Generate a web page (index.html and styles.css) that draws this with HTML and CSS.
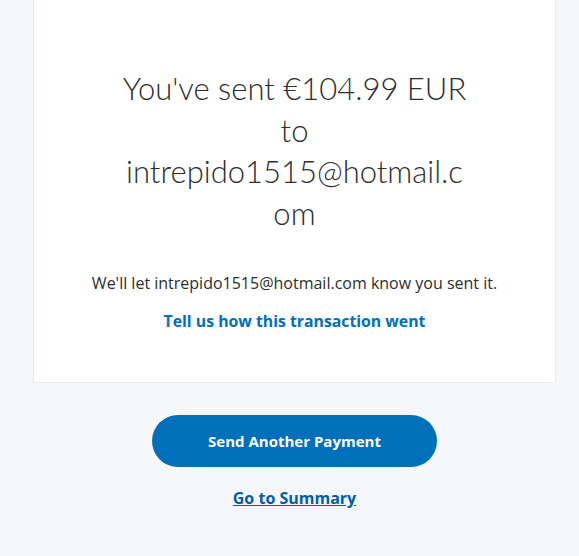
FILE: index.html
```html
<!DOCTYPE html>
<html lang="en">
<head>
<meta charset="utf-8">
<title>Payment sent</title>
<link rel="stylesheet" href="styles.css">
</head>
<body>
<main class="page">
  <section class="card">
    <h1 class="headline">You've sent €104.99 EUR to intrepido1515@hotmail.com</h1>
    <p class="note">We'll let intrepido1515@hotmail.com know you sent it.</p>
    <a class="feedback" href="#">Tell us how this transaction went</a>
  </section>
  <div class="actions">
    <a class="primary-btn" href="#">Send Another Payment</a>
    <a class="summary-link" href="#">Go to Summary</a>
  </div>
</main>
</body>
</html>
```
FILE: styles.css
```css
html, body {
  margin: 0;
  padding: 0;
  background: #f5f7fa;
}
body {
  font-family: "Open Sans", "Liberation Sans", sans-serif;
  color: #2c2e2f;
  height: 556px;
  overflow: hidden;
}
.page {
  display: flex;
  flex-direction: column;
}
.card {
  margin-left: 33px;
  width: 521px;
  background: #ffffff;
  border: 1px solid #eaedf0;
  border-top: none;
  display: flex;
  flex-direction: column;
  align-items: center;
  padding: 68px 0 50px;
}
.headline {
  margin: 0;
  width: 350px;
  font-family: Lato, "Open Sans", sans-serif;
  font-weight: 300;
  font-size: 31px;
  line-height: 41.5px;
  text-align: center;
  overflow-wrap: anywhere;
  color: #2c2e2f;
}
.note {
  margin: 38px 0 0;
  font-size: 16px;
  line-height: 22px;
  text-align: center;
}
.feedback {
  margin-top: 16px;
  font-size: 15.8px;
  font-weight: 700;
  line-height: 22px;
  color: #0070ba;
  text-decoration: none;
}
.actions {
  margin-left: 33px;
  width: 523px;
  display: flex;
  flex-direction: column;
  align-items: center;
  padding-top: 32px;
}
.primary-btn {
  width: 285px;
  height: 52px;
  border-radius: 26px;
  background: #0070ba;
  color: #ffffff;
  font-size: 15px;
  font-weight: 700;
  display: flex;
  align-items: center;
  justify-content: center;
  text-decoration: none;
}
.summary-link {
  margin-top: 20px;
  font-size: 16px;
  font-weight: 700;
  color: #005ea6;
  text-decoration: underline;
  line-height: 22px;
}
```
